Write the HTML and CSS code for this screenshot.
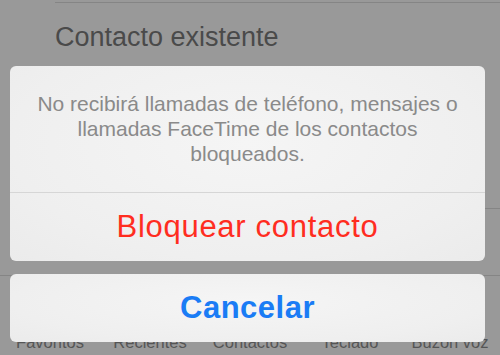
FILE: index.html
```html
<!DOCTYPE html>
<html lang="es">
<head>
<meta charset="utf-8">
<link rel="stylesheet" href="styles.css">
</head>
<body>
<div class="screen">
  <div class="list">
    <div class="row-line"></div>
    <div class="row">Contacto existente</div>
    <div class="row-gap"></div>
    <div class="row-line"></div>
  </div>
  <div class="tabbar">
    <span class="tab">Favoritos</span>
    <span class="tab">Recientes</span>
    <span class="tab">Contactos</span>
    <span class="tab">Teclado</span>
    <span class="tab">Buzón voz</span>
  </div>

  <div class="sheet">
    <div class="card">
      <div class="message">No recibirá llamadas de teléfono, mensajes o llamadas FaceTime de los contactos bloqueados.</div>
      <div class="action destructive">Bloquear contacto</div>
    </div>
    <div class="card">
      <div class="action cancel">Cancelar</div>
    </div>
  </div>
</div>
</body>
</html>
```
FILE: styles.css
```css
html, body {
  margin: 0;
  padding: 0;
  background: #999999;
}
.screen {
  position: relative;
  width: 500px;
  height: 355px;
  overflow: hidden;
  font-family: "Liberation Sans", Arial, sans-serif;
  display: flex;
  flex-direction: column;
}
.list {
  padding-top: 2px;
  padding-left: 55px;
  height: 275px;
  box-sizing: border-box;
}
.row-line {
  height: 1px;
  background: #858585;
}
.row {
  font-size: 27px;
  color: #4a4a4a;
  height: 60px;
  line-height: 28px;
  padding-top: 20px;
  box-sizing: border-box;
}
.row-gap {
  height: 145px;
}
.tabbar {
  border-top: 1px solid #858585;
  flex: 1;
  display: grid;
  grid-template-columns: repeat(5, 100px);
  align-items: end;
}
.tab {
  text-align: center;
  font-size: 16.5px;
  color: #555555;
  line-height: 18px;
  margin-bottom: 4px;
}
.sheet {
  position: absolute;
  top: 66px;
  left: 10px;
  width: 475px;
  display: flex;
  flex-direction: column;
  gap: 13px;
}
.card {
  background: radial-gradient(ellipse at 50% 40%, #f5f5f5 0%, #efefef 70%, #ebebeb 100%);
  border-radius: 6px;
  overflow: hidden;
}
.message {
  padding: 25px 16px 26px;
  text-align: center;
  font-size: 21px;
  line-height: 25px;
  color: #8a8a8a;
  border-bottom: 1px solid #d6d6d6;
}
.action {
  height: 68px;
  display: flex;
  align-items: center;
  justify-content: center;
}
.destructive {
  color: #ff2d1f;
  font-size: 31px;
  letter-spacing: 0.7px;
}
.cancel {
  color: #1a7cf5;
  font-weight: bold;
  font-size: 31px;
  letter-spacing: 0.5px;
  height: 68px;
}
```
